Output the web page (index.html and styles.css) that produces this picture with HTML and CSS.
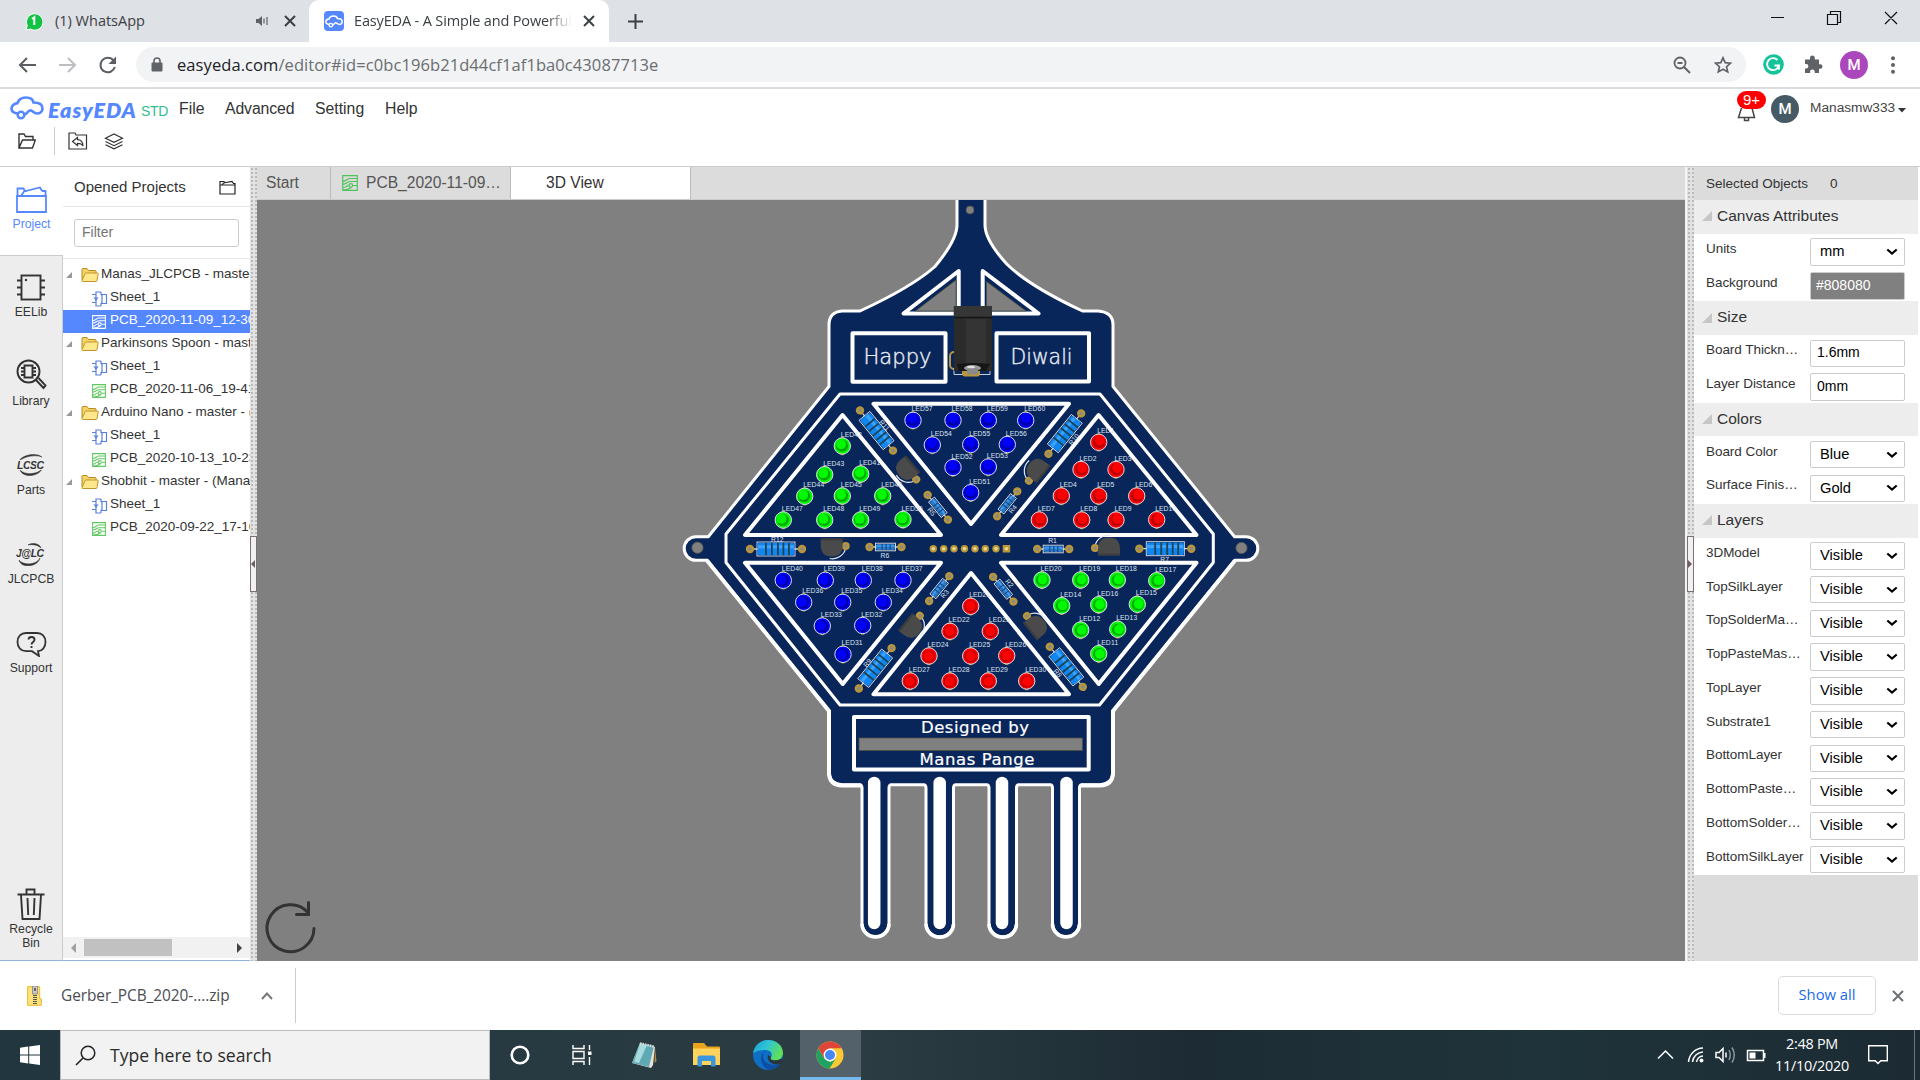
FILE: index.html
```html
<!DOCTYPE html>
<html lang="en">
<head>
<meta charset="utf-8">
<title>EasyEDA - A Simple and Powerful Electronic Circuit Design Tool</title>
<link rel="stylesheet" href="styles.css">
</head>
<body>
<svg class="defs" aria-hidden="true">
  <symbol id="i-folder" viewBox="0 0 18 16"><path d="M1 13V2.500Q1 1.500 2 1.500h4l1.500 2h6.500q1 0 1 1V6" fill="#f3d268" stroke="#b98a1d"/><path d="M1 13.500 4.200 6.500q.3-.5 1-.5H16.500q.9 0 .7.8L16 13.500q-.2 1-1 1H2q-1 0-1-1z" fill="#ffe88c" stroke="#c2942a"/></symbol>
  <symbol id="i-sheet" viewBox="0 0 16 16"><path d="M0 3.500h4M0 11.500h4M4 7V1h5M4 9v6h5" fill="none" stroke="currentColor" stroke-width="1.200"/><path d="M2.500 7l1.500 2 1.500-2zM9 4h1M9 12h1M10 3.500h4.500v9H10zM9 1v2.500h1M9 15v-2.500h1" fill="none" stroke="currentColor" stroke-width="1.200"/></symbol>
  <symbol id="i-pcb" viewBox="0 0 16 16"><path d="M.7.7h14.600v14.600H.7zM.7 6.500c4-.5 4-2.500 7-3h7.600M.7 9.500c4-.5 4.500-3 7.500-3h7M.7 13c3-.2 3.300-2.300 6-2.700M11 10.500h4M.7 15c4 .2 6-.5 9-2.700" fill="none" stroke="currentColor" stroke-width="1.200"/><circle cx="8.800" cy="10.500" r="1.800" fill="none" stroke="currentColor" stroke-width="1.200"/></symbol>
  <symbol id="i-tri" viewBox="0 0 10 10"><path d="M10 0v10H0z" fill="currentColor"/></symbol>
  <symbol id="i-chev" viewBox="0 0 12 8"><path d="M1.300 1.500 6 5.500l4.700-4" fill="none" stroke="#000" stroke-width="2.200"/></symbol>
  <symbol id="i-x" viewBox="0 0 12 12"><path d="M1 1l10 10M11 1L1 11" fill="none" stroke="currentColor" stroke-width="2"/></symbol>
  <symbol id="i-cloud" viewBox="0 0 34 24"><path d="M7.500 17.500C3.500 17 1.500 15 1.500 12.500S4 7.500 7.500 7.200C8.500 3.500 12 1.500 16 1.500c4 0 7 2 7.500 5 4.500 0 9 1.500 9 6 0 3.300-2.700 5-5.500 5-3.500 0-4.500-3.500-7-3-2.700.6-2.700 3.500-5.500 4" fill="none" stroke="currentColor" stroke-width="2.700" stroke-linecap="round"/><circle cx="11" cy="19" r="3.300" fill="none" stroke="currentColor" stroke-width="2.500"/></symbol>
</svg>

<div class="tabstrip">
  <div class="btab">
    <svg class="ic-wa" width="18" height="19" viewBox="0 0 18 19"><path d="M1 18l1.300-4.500A8.200 8.200 0 1 1 5.500 17z" fill="#11c244" stroke="#fff"/><path d="M7 7l2.300-1.800V13" fill="none" stroke="#fff" stroke-width="2"/></svg>
    <span class="btab-t t-wa">(1) WhatsApp</span>
    <svg class="ic-snd" width="13" height="12" viewBox="0 0 13 12"><path d="M0 4h2.500L6 1v10L2.500 8H0z" fill="#5f6368"/><path d="M8 3.500v5M11 2v8" stroke="#5f6368" stroke-width="1.200" fill="none"/></svg>
    <svg class="ic-x1" width="12" height="12"><use href="#i-x"/></svg>
  </div>
  <div class="btab active">
    <div class="favicon"><svg width="18" height="13"><use href="#i-cloud"/></svg></div>
    <span class="btab-t t-eda">EasyEDA - A Simple and Powerful</span>
    <svg class="ic-x2" width="12" height="12"><use href="#i-x"/></svg>
  </div>
  <svg class="ic-plus" width="15" height="15" viewBox="0 0 15 15"><path d="M7.500 0v15M0 7.500h15" stroke="#3c4043" stroke-width="2"/></svg>
  <svg class="winctl" width="130" height="16" viewBox="0 0 130 16"><path d="M0 6.500h13M56.500 3.500h10v10h-10zM59.500 3V.5h10v11H67M114 1l12 12M126 1l-12 12" fill="none" stroke="#111" stroke-width="1.200"/></svg>
</div>

<div class="toolbar">
  <svg width="102" height="20" viewBox="0 0 102 20"><g fill="none" stroke-width="2"><path d="M19 10H3M10 3l-7 7 7 7" stroke="#5a5d61"/><path d="M42 10h16M51 3l7 7-7 7" stroke="#bcbec1"/><path d="M96.500 5.500A7.300 7.300 0 1 0 97.800 12" stroke="#5a5d61"/></g><path d="M99 1.500V9h-7.500z" fill="#5a5d61"/></svg>
  <div class="omnibox">
    <svg width="12" height="15" viewBox="0 0 12 15"><path d="M3 6V4a3 3 0 0 1 6 0v2" fill="none" stroke="#5f6368" stroke-width="1.600"/><rect x=".5" y="5.500" width="11" height="9" rx="1" fill="#5f6368"/></svg>
    <span class="url"><b>easyeda.com</b>/editor#id=c0bc196b21d44cf1af1ba0c43087713e</span>
    <svg class="ic-zoom" width="18" height="18" viewBox="0 0 18 18"><circle cx="7" cy="7" r="5.500" fill="none" stroke="#5f6368" stroke-width="1.800"/><path d="M4.500 7h5M11 11l6 6" stroke="#5f6368" stroke-width="2"/></svg>
    <svg class="ic-star" width="18" height="18" viewBox="0 0 18 18"><path d="M9 1.800l2.200 4.900 5.300.5-4 3.500 1.200 5.200L9 13.200l-4.700 2.700 1.200-5.200-4-3.500 5.300-.5z" fill="none" stroke="#5f6368" stroke-width="1.700"/></svg>
  </div>
  <svg class="ic-gram" width="21" height="21" viewBox="0 0 21 21"><circle cx="10.500" cy="10.500" r="10.300" fill="#15c39a"/><path d="M14.500 6A6 6 0 1 0 16 11.500h-4.500M16 11.500v4" fill="none" stroke="#fff" stroke-width="1.900"/></svg>
  <svg class="ic-puz" width="19" height="19" viewBox="0 0 19 19"><path d="M1 4.500h5V3a2.400 2.400 0 0 1 4.800 0v1.500H15v4.700h1.200a2.300 2.300 0 0 1 0 4.600H15V18h-4.300v-1.200a2.300 2.300 0 0 0-4.600 0V18H1v-4.500h1.200a2.200 2.200 0 0 0 0-4.400H1z" fill="#5f6368"/></svg>
  <div class="avatar purple">M</div>
  <svg class="ic-dots" width="4" height="18" viewBox="0 0 4 18"><circle cx="2" cy="2.200" r="2"/><circle cx="2" cy="9" r="2"/><circle cx="2" cy="15.800" r="2"/></svg>
</div>

<header class="app">
  <div class="menu">
    <svg class="logo" width="34" height="26"><use href="#i-cloud"/></svg>
    <span class="brand">EasyEDA</span><span class="std">STD</span>
    <span class="m1">File</span><span class="m2">Advanced</span><span class="m3">Setting</span><span class="m4">Help</span>
    <div class="bell">
      <svg width="20" height="14" viewBox="0 0 20 14"><path d="M4.500 0 1.500 9.500h16L15 0M7.500 10v2.500h4V10" fill="none" stroke="#444" stroke-width="1.500"/></svg>
      <span class="badge">9+</span>
    </div>
    <div class="avatar slate">M</div>
    <span class="user">Manasmw333</span>
    <svg class="caret" width="8" height="5" viewBox="0 0 8 5"><path d="M0 0h8L4 4.500z" fill="#333"/></svg>
  </div>
  <div class="tools">
    <svg width="18" height="16" viewBox="0 0 18 16"><path d="M1 15V1h5l1.500 2.500H15V7M1 15h13.500l2.800-8H4.500z" fill="none" stroke="#333" stroke-width="1.400"/></svg>
    <i class="sep"></i>
    <svg width="20" height="18" viewBox="0 0 20 18"><path d="M1 17V1h6l1 2h10.500v14zM9.500 5.500 4.500 9.500l5 4v-2.200c3 0 4.500.7 5.500 2.700 0-4-2-6.300-5.500-6.300z" fill="none" stroke="#333" stroke-width="1.200"/></svg>
    <svg class="lay" width="20" height="17" viewBox="0 0 20 17"><path d="M10 1l8.500 4.200L10 9.400 1.500 5.200zM1.500 8.500 10 12.700l8.500-4.200M1.500 11.700 10 15.900l8.500-4.200" fill="none" stroke="#333" stroke-width="1.200"/></svg>
  </div>
</header>

<main class="work">
  <nav class="rail">
    <div class="rail-i on"><svg width="31" height="27" viewBox="0 0 31 27"><path d="M1 10h29v16H1zM1.500 10V2.500h6L9 5h2M5 10l3-4.500 16-4 2 3.500M26 5h3.500v5" fill="none" stroke="#5588ff" stroke-width="1.800"/></svg><span>Project</span></div>
    <div class="rail-i"><svg width="30" height="27" viewBox="0 0 30 27"><rect x="5.500" y="1.500" width="19" height="24" fill="none" stroke="#333" stroke-width="1.900"/><path d="M1 6.500h4M1 13.500h4M1 20.500h4M25 6.500h4M25 13.500h4M25 20.500h4" stroke="#333" stroke-width="1.900"/><circle cx="10" cy="6" r="1.200" fill="#333"/></svg><span>EELib</span></div>
    <div class="rail-i"><svg width="31" height="31" viewBox="0 0 31 31"><circle cx="12.500" cy="12.500" r="11" fill="none" stroke="#333" stroke-width="1.900"/><path d="M8.500 6.500h8v12h-8zM5 9h3.500M5 12.500h3.500M5 16h3.500M16.500 9H20M16.500 12.500H20M16.500 16H20M20 21l7.500 8 2-2.500-7-7.500" fill="none" stroke="#333" stroke-width="1.900"/></svg><span>Library</span></div>
    <div class="rail-i lc"><svg width="30" height="24" viewBox="0 0 30 24"><path d="M3 8C6 2 20-1 26 4 20 1.500 9 3 3 8zM4 17c4 5 17 5 22-1-4 8-19 9-22 1z" fill="#333" stroke="#333" stroke-width=".5"/><text x="1" y="15.500" textLength="27" class="lcsc">LCSC</text></svg><span>Parts</span></div>
    <div class="rail-i lc"><svg width="30" height="24" viewBox="0 0 30 24"><path d="M12 3c5-3 12-1 13 3-3-3-8-4-13-3zM3 18c3 5 17 6 21-2-2 9-19 11-21 2z" fill="#333" stroke="#333" stroke-width=".5"/><text x="0" y="14.500" textLength="28" class="lcsc">J@LC</text></svg><span>JLCPCB</span></div>
    <div class="rail-i"><svg width="31" height="25" viewBox="0 0 31 25"><path d="M10 1h11c5 0 8.500 3.500 8.500 9S26 19 22 19.200l1 4.800-7-4.800h-6c-5 0-8.500-3.700-8.500-9.200S5 1 10 1z" fill="none" stroke="#333" stroke-width="1.800"/><path d="M12.500 7.500c.3-3.500 6-3.300 6 .2 0 2.300-3 2.200-3 4.800M15.500 14v2" fill="none" stroke="#333" stroke-width="1.900"/></svg><span>Support</span></div>
    <div class="rail-i bin"><svg width="28" height="32" viewBox="0 0 28 32"><path d="M.5 6.500h27M9.500 6V1.500h8V6M4 7l1.500 24h17L24 7M10.500 10l.7 17M17.500 10l-.7 17" fill="none" stroke="#333" stroke-width="1.900"/></svg><span>Recycle<br>Bin</span></div>
  </nav>

  <aside class="projects">
    <div class="p-head"><span>Opened Projects</span><svg width="17" height="15" viewBox="0 0 17 15"><path d="M1 5h15v9H1zM1 5V1.500h4L6 3M3 5l1.500-2L13 1.500l1.500 2H16V5" fill="none" stroke="#222" stroke-width="1.200"/></svg></div>
    <div class="p-filter"><div class="filter">Filter</div></div>
    <div class="tree">
      <div class="row"><svg class="tw" width="6" height="6"><use href="#i-tri"/></svg><svg width="18" height="16"><use href="#i-folder"/></svg><span>Manas_JLCPCB - master</span></div>
      <div class="row leaf"><svg width="16" height="16"><use href="#i-sheet"/></svg><span>Sheet_1</span></div>
      <div class="row leaf sel"><svg class="pcb" width="14" height="14"><use href="#i-pcb"/></svg><span>PCB_2020-11-09_12-30</span></div>
      <div class="row"><svg class="tw" width="6" height="6"><use href="#i-tri"/></svg><svg width="18" height="16"><use href="#i-folder"/></svg><span>Parkinsons Spoon - mast</span></div>
      <div class="row leaf"><svg width="16" height="16"><use href="#i-sheet"/></svg><span>Sheet_1</span></div>
      <div class="row leaf"><svg class="pcb" width="14" height="14"><use href="#i-pcb"/></svg><span>PCB_2020-11-06_19-41</span></div>
      <div class="row"><svg class="tw" width="6" height="6"><use href="#i-tri"/></svg><svg width="18" height="16"><use href="#i-folder"/></svg><span>Arduino Nano - master - (</span></div>
      <div class="row leaf"><svg width="16" height="16"><use href="#i-sheet"/></svg><span>Sheet_1</span></div>
      <div class="row leaf"><svg class="pcb" width="14" height="14"><use href="#i-pcb"/></svg><span>PCB_2020-10-13_10-23</span></div>
      <div class="row"><svg class="tw" width="6" height="6"><use href="#i-tri"/></svg><svg width="18" height="16"><use href="#i-folder"/></svg><span>Shobhit - master - (Mana</span></div>
      <div class="row leaf"><svg width="16" height="16"><use href="#i-sheet"/></svg><span>Sheet_1</span></div>
      <div class="row leaf"><svg class="pcb" width="14" height="14"><use href="#i-pcb"/></svg><span>PCB_2020-09-22_17-16</span></div>
    </div>
    <div class="hscroll"><svg width="5" height="10" viewBox="0 0 5 10"><path d="M5 0v10L0 5z" fill="#a0a0a0"/></svg><i></i><svg class="r" width="5" height="10" viewBox="0 0 5 10"><path d="M0 0v10l5-5z" fill="#404040"/></svg></div>
  </aside>

  <div class="split"><div class="grip"><svg width="4" height="8" viewBox="0 0 4 8"><path d="M4 0v8L0 4z" fill="#6b5f63"/></svg></div></div>

  <section class="center">
    <div class="tabs">
      <div class="tab start">Start</div>
      <div class="tab pcbtab"><svg width="16" height="16"><use href="#i-pcb"/></svg><span>PCB_2020-11-09…</span></div>
      <div class="tab view on">3D View</div>
    </div>
    <svg class="board" id="board" viewBox="257 200 1428 761" width="1428" height="761"></svg>
  </section>

  <div class="split right"><div class="grip"><svg width="4" height="8" viewBox="0 0 4 8"><path d="M0 0v8l4-4z" fill="#6b5f63"/></svg></div></div>

  <aside class="props">
    <div class="sel-obj"><span>Selected Objects</span><span>0</span></div>
    <div class="ph"><svg width="10" height="10"><use href="#i-tri"/></svg>Canvas Attributes</div>
    <div class="pr"><label>Units</label><div class="in dd">mm<svg width="12" height="8"><use href="#i-chev"/></svg></div></div>
    <div class="pr"><label>Background</label><div class="in bg">#808080</div></div>
    <div class="ph"><svg width="10" height="10"><use href="#i-tri"/></svg>Size</div>
    <div class="pr"><label>Board Thickn…</label><div class="in">1.6mm</div></div>
    <div class="pr"><label>Layer Distance</label><div class="in">0mm</div></div>
    <div class="ph"><svg width="10" height="10"><use href="#i-tri"/></svg>Colors</div>
    <div class="pr"><label>Board Color</label><div class="in dd">Blue<svg width="12" height="8"><use href="#i-chev"/></svg></div></div>
    <div class="pr"><label>Surface Finis…</label><div class="in dd">Gold<svg width="12" height="8"><use href="#i-chev"/></svg></div></div>
    <div class="ph"><svg width="10" height="10"><use href="#i-tri"/></svg>Layers</div>
    <div class="pr"><label>3DModel</label><div class="in dd">Visible<svg width="12" height="8"><use href="#i-chev"/></svg></div></div>
    <div class="pr"><label>TopSilkLayer</label><div class="in dd">Visible<svg width="12" height="8"><use href="#i-chev"/></svg></div></div>
    <div class="pr"><label>TopSolderMa…</label><div class="in dd">Visible<svg width="12" height="8"><use href="#i-chev"/></svg></div></div>
    <div class="pr"><label>TopPasteMas…</label><div class="in dd">Visible<svg width="12" height="8"><use href="#i-chev"/></svg></div></div>
    <div class="pr"><label>TopLayer</label><div class="in dd">Visible<svg width="12" height="8"><use href="#i-chev"/></svg></div></div>
    <div class="pr"><label>Substrate1</label><div class="in dd">Visible<svg width="12" height="8"><use href="#i-chev"/></svg></div></div>
    <div class="pr"><label>BottomLayer</label><div class="in dd">Visible<svg width="12" height="8"><use href="#i-chev"/></svg></div></div>
    <div class="pr"><label>BottomPaste…</label><div class="in dd">Visible<svg width="12" height="8"><use href="#i-chev"/></svg></div></div>
    <div class="pr"><label>BottomSolder…</label><div class="in dd">Visible<svg width="12" height="8"><use href="#i-chev"/></svg></div></div>
    <div class="pr"><label>BottomSilkLayer</label><div class="in dd">Visible<svg width="12" height="8"><use href="#i-chev"/></svg></div></div>
  </aside>
</main>

<div class="downloads">
  <div class="dl">
    <svg width="15" height="20" viewBox="0 0 15 20"><path d="M.7.7h12v12h1.600v6.600H.7z" fill="#ffe27a" stroke="#e8b92e"/><path d="M5.500 0h5v8h-5z" fill="#c9c9c9" stroke="#777" stroke-width=".7"/><path d="M8 2v3" stroke="#444" stroke-width="1.500"/><path d="M8 9v10" stroke="#555" stroke-width="4" stroke-dasharray="1 1"/></svg>
    <span>Gerber_PCB_2020-....zip</span>
    <svg class="up" width="12" height="8" viewBox="0 0 12 8"><path d="M1 7l5-5.500L11 7" fill="none" stroke="#777" stroke-width="2"/></svg>
  </div>
  <div class="showall">Show all</div>
  <svg class="dlx" width="12" height="12"><use href="#i-x"/></svg>
</div>

<footer class="taskbar">
  <div class="start-btn"><svg width="20" height="20" viewBox="0 0 20 20"><path d="M0 2.800 8.200 1.600v7.900H0zM9.200 1.500 20 0v9.500H9.200zM0 10.500h8.200v7.900L0 17.200zM9.200 10.500H20V20L9.200 18.500z" fill="#fff"/></svg></div>
  <div class="search"><svg width="21" height="21" viewBox="0 0 21 21"><circle cx="13" cy="8" r="6.800" fill="none" stroke="#222" stroke-width="1.500"/><path d="M8 13 1 20" stroke="#222" stroke-width="1.600"/></svg><span>Type here to search</span></div>
  <div class="tb-i"><svg width="20" height="20" viewBox="0 0 20 20"><circle cx="10" cy="10" r="8.300" fill="none" stroke="#fff" stroke-width="2.600"/></svg></div>
  <div class="tb-i"><svg width="22" height="20" viewBox="0 0 22 20"><path d="M2 0v3.500h11V0M2 20v-3.500h11V20M2 6.500h11v7H2zM18.500 0v5M18.500 12v8" fill="none" stroke="#fff" stroke-width="1.400"/><path d="M17 6.500h3.500V10H17z" fill="#fff"/></svg></div>
  <div class="tb-i"><svg width="27" height="27" viewBox="0 0 27 27"><path d="M9 1 24 5 22 23 20 26 1 21z" fill="#e7e3da"/><path d="M9 1 23 4 18 25 1 21z" fill="#5fa9b5"/><path d="M9 2 16 3 8 21 3 20z" fill="#a8dbe0"/><path d="M9 1.500 23 4.500" stroke="#ddd" stroke-width="2.500" stroke-dasharray="1.500 1"/><path d="M24 6l1.500 13-2 2z" fill="#b98b3f"/></svg></div>
  <div class="tb-i"><svg width="27" height="24" viewBox="0 0 27 24"><path d="M0 1q0-1 1-1h10l3 3.500h12q1 0 1 1V22H0z" fill="#e9a31d"/><path d="M0 5.500h27V22H0z" fill="#ffd25c"/><path d="M4.500 23.500V15q0-2.500 2.500-2.500h13q2.500 0 2.500 2.500v8.500H18V18H9v5.500z" fill="#3a96dd"/></svg></div>
  <div class="tb-i"><svg width="30" height="30" viewBox="0 0 30 30"><defs><linearGradient id="eg" x1="0" y1="0" x2="1" y2=".4"><stop offset="0" stop-color="#1a9ad6"/><stop offset=".5" stop-color="#2fc4d6"/><stop offset="1" stop-color="#5ee05a"/></linearGradient></defs><circle cx="15" cy="15" r="15" fill="#0f6fc6"/><path d="M0 14C1 5 8 0 15 0c9 0 15 6 15 13 0 5-4 7.500-8 7.500-3.500 0-5.500-1.200-4-3.200 1.500-2 1.500-7.300-6-7.300C6 10 1 12 0 14z" fill="url(#eg)"/><path d="M12 11c-3 3-3 9 2 12 4 2.500 9 2.300 14 0-3 4-7 6.500-11 7C8 28 5 16 12 11z" fill="#0c4fa3"/><path d="M18 17c-2 3 4 5 11 1.500l1 2q-1 2-3 3.500C20 26 13 21 15 15z" fill="#29373d"/></svg></div>
  <div class="tb-i act"><svg width="28" height="28" viewBox="0 0 28 28"><circle cx="14" cy="14" r="13.500" fill="#fbc934"/><path d="M2.300 7.200A13.500 13.500 0 0 1 25.700 7.200H14L8.100 17.400z" fill="#e04638"/><path d="M2.300 7.200A13.500 13.500 0 0 0 13.500 27.500L19.800 17.500 14 20.800 8.100 17.400z" fill="#1da362"/><circle cx="14" cy="14" r="6.400" fill="#fff"/><circle cx="14" cy="14" r="5" fill="#4587f4"/></svg></div>
  <svg class="tray" width="110" height="20" viewBox="0 0 110 20"><g fill="none" stroke="#fff" stroke-width="1.500"><path d="M1 13.500 8.500 6l7.500 7.500"/><path d="M31.500 17A15 15 0 0 1 46 3M35.500 17A11 11 0 0 1 46 7M39.500 17A7 7 0 0 1 46 11"/><path d="M59 7.500h3l4-4v13l-4-4h-3z"/><path d="M69 7.500v5"/><path d="M72 5q2.500 5 0 10M75 2.500q4.500 7.500 0 15" stroke="#8d979b"/><path d="M90.500 5.500h16v10h-16z"/></g><circle cx="44.500" cy="15.500" r="2" fill="#fff"/><path d="M92.500 7.500h6v6h-6zM107 8h1.500v5H107z" fill="#fff"/></svg>
  <div class="clock"><span>2:48 PM</span><span>11/10/2020</span></div>
  <svg class="note" width="20" height="20" viewBox="0 0 20 20"><path d="M.7.7h18.600v15h-6.500L10 18.500 7.200 15.700H.7z" fill="none" stroke="#fff" stroke-width="1.400"/></svg>
  <i class="peek"></i>
</footer>
<script src="board.js"></script>
</body>
</html>
```
FILE: board.js
```js
// Draws the lantern PCB: outline, silkscreen, LEDs, resistors and transistors.
(function () {
  var out = [];
  var FACE = '#09265b';

  function poly(pts, cls) {
    out.push('<polygon class="' + cls + '" points="' + pts + '"/>');
  }
  function pad(x, y, r) {
    out.push('<circle cx="' + x + '" cy="' + y + '" r="' + r + '" fill="#b8963a"/><circle cx="' + x + '" cy="' + y + '" r="' + (r * 0.42) + '" fill="#8c8a80"/>');
  }

  // board outline with the four tassel fingers
  var fingers = [[862, 889], [926, 953.5], [989, 1016.5], [1052.500, 1079.500]];
  var d = 'M957 196V225Q957 240 935 266.500Q912 287 860 311H842Q829 312 829 325V386.500L708.300 536.700H696A11.700 11.700 0 0 0 696 560.300H707L829 711V774Q830 784 842 784.700';
  fingers.forEach(function (f) {
    var r = (f[1] - f[0]) / 2;
    d += 'H' + (f[0] - 2) + 'Q' + f[0] + ' 785 ' + f[0] + ' 788V923A' + r + ' ' + r + ' 0 0 0 ' + f[1] + ' 923V788Q' + f[1] + ' 785 ' + (f[1] + 2) + ' 784.700';
  });
  d += 'H1100Q1112 784 1113 774V711L1235 560.300H1246A11.700 11.700 0 0 0 1246 536.700H1234.500L1113 386.500V325Q1113 312 1098 311H1082.500Q1029 286 1006.700 264Q985 240 985 225V196Z';
  out.push('<path d="' + d + '" fill="' + FACE + '" stroke="#fff" stroke-width="3"/>');
  out.push('<path d="M707 560.500 829 711V774Q830 785 842 785.500H861M1235 560.500 1113 711V774Q1112 785 1100 785.500H1081" fill="none" stroke="#fff" stroke-width="4"/>');
  [874.2, 939.7, 1002, 1066.5].forEach(function (x, i) {
    out.push('<path d="M' + x + ' 783V923" stroke="#fff" stroke-width="12.500" stroke-linecap="round"/>');
    out.push('<path d="M' + fingers[i][0] + ' 924A13.500 13 0 0 0 ' + fingers[i][1] + ' 924" fill="none" stroke="#fff" stroke-width="3.600"/>');
  });
  [[970, 210, 4], [697.5, 547.7, 5.7], [1241.5, 548, 5.7]].forEach(function (h) {
    out.push('<circle cx="' + h[0] + '" cy="' + h[1] + '" r="' + h[2] + '" fill="#808080" stroke="#4f4d42" stroke-width=".7"/>');
  });

  // silkscreen frames
  poly('840,394 1100,394 1213.300,534 1213.300,562.500 1099.500,705 840,705 726,562.500 726,534', 'silk thin');
  poly('873.500,403.700 1069,403.700 971,524', 'silk');
  poly('842.500,415 745,535 941,535', 'silk');
  poly('1098.600,415 1001,535 1196.500,535', 'silk');
  poly('745,562.700 941,562.700 842.700,684', 'silk');
  poly('1001,562.700 1196.500,562.700 1098.700,684', 'silk');
  poly('971,573 873.500,694.300 1069,694.300', 'silk');
  poly('958.700,271 903.500,313.500 958.700,313.500', 'silk');
  poly('982.700,271 1038.500,313.500 982.700,313.500', 'silk');
  poly('956,280 915.500,311 956,311', 'slot');
  poly('986.500,281.500 1026,311 986.500,311', 'slot');
  out.push('<rect class="silk" x="852.500" y="333.300" width="93" height="48.500"/><rect class="silk" x="996.500" y="333.300" width="92.500" height="48.300"/>');
  out.push('<rect class="silk" x="854" y="717" width="234.700" height="52.500"/><rect class="slot" x="859" y="738" width="223.500" height="12.600"/>');
  out.push('<text class="word" x="863.500" y="364" textLength="68" lengthAdjust="spacingAndGlyphs">Happy</text><text class="word" x="1010.500" y="364" textLength="62" lengthAdjust="spacingAndGlyphs">Diwali</text>');
  out.push('<text class="by" x="921" y="733.300" textLength="108">Designed by</text><text class="by" x="919.500" y="764.800" textLength="115">Manas Pange</text>');

  // resistors: [cx, cy, angle, label, label dx, label dy]
  function resistor(cx, cy, a, big, name, ly) {
    var h = big ? 26 : 16, bl = big ? 19 : 10, bh = big ? 6.2 : 3;
    out.push('<g transform="translate(' + cx + ' ' + cy + ') rotate(' + a + ')">');
    out.push('<path d="M' + -h + ' 0H' + h + '" stroke="#d8d2c4" stroke-width="1.300"/>');
    pad(-h, 0, 4.2); pad(h, 0, 4.2);
    out.push('<rect x="' + -bl + '" y="' + (-bh - 0.8) + '" width="' + bl * 2 + '" height="' + (bh * 2 + 1.6) + '" fill="none" stroke="#dfe4ee" stroke-width=".9"/>');
    out.push('<rect x="' + (-bl + 0.5) + '" y="' + -bh + '" width="' + (bl * 2 - 1) + '" height="' + bh * 2 + '" rx="2" fill="' + (big ? '#0f86f2' : '#2c78c4') + '"/>');
    out.push('<rect x="' + (-bl + 1) + '" y="' + -bh * 0.6 + '" width="' + (bl * 2 - 2) + '" height="' + bh * 0.5 + '" fill="#3da3ff"/>');
    (big ? [-11, -5, 1, 6.5, 12] : [-4, 0, 4]).forEach(function (x) {
      out.push('<rect x="' + x + '" y="' + -bh + '" width="' + (big ? 1.8 : 1.2) + '" height="' + bh * 2 + '" fill="' + (big ? '#1d4350' : '#154a86') + '"/>');
    });
    out.push('<text class="ref" x="-5" y="' + ly + '">' + name + '</text></g>');
  }
  resistor(876.5, 430.5, 50.6, true, 'R11', -7);
  resistor(1064.8, 433.6, -51, true, 'R10', 13);
  resistor(776, 549, 0, true, 'R12', -7);
  resistor(1165.3, 548.7, 0, true, 'R7', 13);
  resistor(875.2, 668.3, -51, true, 'R9', -7);
  resistor(1066.3, 666.8, 50.6, true, 'R8', 13);
  resistor(937.8, 507.3, 50.6, false, 'R5', 10);
  resistor(1007.2, 503.8, -51, false, 'R4', 10);
  resistor(885.5, 547, 0, false, 'R6', 11);
  resistor(1053.2, 549, 0, false, 'R1', -6);
  resistor(939.2, 588.6, -51, false, 'R3', 10);
  resistor(1003.3, 589.2, 50.6, false, 'R2', -6);

  // transistors
  [[908, 468, 50], [1038.5, 470.5, 129], [831.7, 545, 0], [1109, 549, 180], [910.2, 626, -51], [1035, 627.5, 231]].forEach(function (t) {
    out.push('<g transform="translate(' + t[0] + ' ' + t[1] + ') rotate(' + t[2] + ')">');
    out.push('<path d="M-2 13.500A13.500 13.500 0 0 0 14 3" fill="none" stroke="#e5e8ef" stroke-width="1.200"/>');
    pad(14, 1, 4);
    out.push('<path d="M-11-6.500H11V0Q11 11.500 0 11.500T-11 0Z" fill="#4a4a4a"/><path d="M-11-6.500H11V-4.500H-11Z" fill="#3c3c3c"/></g>');
  });

  // header pins
  [933.3, 943.7, 954, 964.5, 975, 985.3, 996].forEach(function (x) {
    out.push('<circle cx="' + x + '" cy="548.700" r="3.700" fill="#b8963a"/><circle cx="' + x + '" cy="548.700" r="1.800" fill="#ead98a"/>');
  });
  out.push('<rect x="1002.700" y="545" width="7.500" height="7.500" fill="#b8963a"/><circle cx="1006.400" cy="548.700" r="1.800" fill="#ead98a"/>');

  // power jack
  out.push('<rect x="950" y="352" width="10" height="17" rx="4" fill="none" stroke="#b8963a" stroke-width="2"/><path d="M954 368V374.500H990V368" fill="none" stroke="#c9cedb"/>');
  out.push('<rect x="962" y="368" width="18" height="8.500" rx="3" fill="#b8963a"/>');
  out.push('<path d="M954 317H992V371Q985 372 981 366H964Q960 372 954 371Z" fill="#2b2b2b"/><rect x="953.700" y="306" width="38.300" height="11.500" fill="#363636"/><path d="M954 317.500H992" stroke="#151515" stroke-width="1.500"/>');
  out.push('<rect x="966" y="319" width="20" height="46" fill="#343434"/><path d="M957 364Q973 362 990 364L986 371H959Z" fill="#161616"/><ellipse cx="972.500" cy="368" rx="8.500" ry="3" fill="#9a9a9a"/><rect x="967" y="368" width="11" height="6.500" rx="2" fill="#8a8a8a"/><ellipse cx="971" cy="367" rx="4" ry="1.300" fill="#e0e0e0"/>');

  // LEDs: [x, y, number]
  var groups = [
    ['#00fa00', '#00a800', [[842.3, 446, 42], [824.7, 474.7, 43], [860.7, 474, 41], [804.7, 496.3, 44], [842.3, 496, 45], [882.7, 496, 46], [783.3, 520, 47], [824.7, 520, 48], [860.7, 520, 49], [903, 519.5, 50]]],
    ['#0000fa', '#0000a0', [[913, 420.3, 57], [953, 420.3, 58], [988.3, 420.3, 59], [1025.7, 420.3, 60], [932.3, 445, 54], [970.7, 444.5, 55], [1007.3, 444.5, 56], [953, 467.5, 52], [988.3, 467, 53], [970.7, 492.7, 51]]],
    ['#ff0000', '#b80000', [[1098.7, 442.3, 1], [1081, 469.5, 2], [1116, 469.5, 3], [1061.3, 496, 4], [1098.7, 496, 5], [1136.7, 496, 6], [1039.3, 520, 7], [1081.7, 520, 8], [1116, 520, 9], [1156.7, 519.7, 10]]],
    ['#0000fa', '#0000a0', [[783.3, 580.3, 40], [825.3, 580.3, 39], [863.3, 580.3, 38], [903, 580.3, 37], [803.7, 602.3, 36], [842.7, 602.3, 35], [883.3, 602.3, 34], [822.3, 626, 33], [862.7, 625.5, 32], [843, 654.3, 31]]],
    ['#ff0000', '#b80000', [[970.7, 606.3, 21], [950, 631.3, 22], [990.3, 631.3, 23], [929, 656, 24], [970.7, 656, 25], [1006.7, 655.7, 26], [910.3, 681, 27], [950, 681, 28], [988.3, 681, 29], [1026.7, 681, 30]]],
    ['#00fa00', '#00a800', [[1042, 580, 20], [1080.7, 580, 19], [1117.3, 580, 18], [1156.7, 580.7, 17], [1061.7, 605.7, 14], [1098.7, 604.7, 16], [1137.3, 604.3, 15], [1080.7, 630, 12], [1117.7, 629.3, 13], [1098.7, 653.7, 11]]]
  ];
  groups.forEach(function (g) {
    g[2].forEach(function (p) {
      var x = p[0], y = p[1];
      // each dome leans away from the middle of the board
      var dx = (x - 971) * 0.009, dy = (y - 548) * 0.009;
      out.push('<rect x="' + (x - 2) + '" y="' + (y - 9.2) + '" width="4" height="18.400" rx="1.500" fill="#a98d45"/>');
      out.push('<circle cx="' + x + '" cy="' + y + '" r="8.200" fill="' + g[0] + '" stroke="#d9dce8" stroke-width="1"/>');
      out.push('<circle cx="' + (x + dx * 0.4) + '" cy="' + (y + dy * 0.4) + '" r="6.200" fill="' + g[1] + '"/>');
      out.push('<circle cx="' + (x + dx) + '" cy="' + (y - 0.8 + dy) + '" r="4.900" fill="' + g[0] + '"/>');
      out.push('<text class="ref" x="' + (x - 1.5) + '" y="' + (y - 9) + '" textLength="' + (p[2] < 10 ? 17 : 21) + '">LED' + p[2] + '</text>');
    });
  });

  // reset-view arrow in the corner of the viewport
  out.push('<path d="M314 928.500A23.500 23.500 0 1 1 308 912.500M308.500 902.500V914.500H296.500" fill="none" stroke="#333" stroke-width="3" stroke-linecap="round"/>');

  document.getElementById('board').innerHTML = out.join('');
})();
```
FILE: styles.css
```css
* { box-sizing: border-box; }
body { margin: 0; width: 1920px; height: 1080px; overflow: hidden; background: #fff; color: #333; font: 13.5px/1.2 "Liberation Sans", Arial, sans-serif; display: flex; flex-direction: column; }
svg { display: block; flex: none; }
.defs { position: absolute; width: 0; height: 0; }

/* browser chrome */
.tabstrip { height: 42px; flex: none; background: #dee1e6; display: flex; align-items: center; font-family: "Open Sans", sans-serif; }
.btab { height: 42px; width: 309px; display: flex; align-items: center; padding-left: 25px; color: #3c4043; font-size: 14.5px; }
.btab.active { width: 300px; background: #fff; border-radius: 10px 10px 0 0; padding-left: 15px; }
.btab-t { white-space: nowrap; overflow: hidden; }
.t-wa { margin-left: 12px; width: 201px; }
.t-eda { margin-left: 10px; width: 218px; letter-spacing: -.15px; -webkit-mask-image: linear-gradient(90deg, #000 88%, transparent 100%); mask-image: linear-gradient(90deg, #000 88%, transparent 100%); }
.ic-x1 { margin-left: 15px; color: #3c4043; }
.ic-x2 { margin-left: 11px; color: #3c4043; }
.favicon { width: 20px; height: 20px; border-radius: 4px; background: #5588ff; color: #fff; display: flex; align-items: center; justify-content: center; }
.ic-plus { margin-left: 19px; }
.winctl { margin-left: auto; margin-right: 19px; margin-bottom: 4px; }
.toolbar { height: 47px; flex: none; display: flex; align-items: center; padding: 0 25px 0 17px; border-bottom: 2px solid #dadce0; }
.omnibox { margin-left: 17px; width: 1610px; height: 35px; border-radius: 18px; background: #f1f3f4; display: flex; align-items: center; padding-left: 15px; }
.url { margin-left: 14px; width: 1484px; font: 16.5px "Open Sans", sans-serif; color: #6a6d71; letter-spacing: .08px; }
.url b { font-weight: 400; color: #202124; }
.ic-zoom { margin-left: 12px; }
.ic-star { margin-left: 23px; }
.ic-gram { margin-left: 17px; }
.ic-puz { margin-left: 20px; }
.avatar { width: 28px; height: 28px; border-radius: 50%; color: #fff; display: flex; align-items: center; justify-content: center; font: 500 15px Roboto, sans-serif; flex: none; }
.purple { background: #ab47bc; margin-left: 17px; }
.slate { background: #455a64; margin-left: 4px; margin-top: -2px; }
.ic-dots { margin-left: 23px; fill: #5f6368; }

/* application header */
.app { height: 78px; flex: none; border-bottom: 1px solid #ccc; }
.menu { height: 40px; display: flex; align-items: center; padding: 1px 0 0 10px; font-size: 15.8px; }
.logo { color: #5588ff; margin-top: -3px; }
.brand { margin-left: 4px; width: 91px; font: italic 800 21.5px "Lato", sans-serif; letter-spacing: .9px; color: #5588ff; }
.std { width: 27px; margin-left: 2px; font-size: 14px; color: #33bd91; padding-top: 3px; letter-spacing: -.3px; }
.m1 { margin-left: 11px; width: 46px; }
.m2 { width: 90px; letter-spacing: -.1px; }
.m3 { width: 70px; }
.m4 { width: 33px; }
.bell { position: relative; margin-left: 1319px; width: 30px; height: 40px; padding-top: 18px; }
.badge { position: absolute; left: 0; top: 1px; width: 29px; height: 18px; border-radius: 9px; background: #f00; color: #fff; font-size: 15px; line-height: 18px; text-align: center; }
.user { margin-left: 11px; font-size: 13.7px; color: #444; padding-bottom: 2px; }
.caret { margin-left: 3px; margin-top: 1px; }
.tools { display: flex; align-items: center; height: 28px; margin-top: -2px; padding-left: 18px; }
.sep { width: 1px; height: 28px; background: #ccc; margin-left: 18px; margin-right: 13px; }
.lay { margin-left: 16px; }

/* workspace */
.work { height: 794px; flex: none; display: flex; }
.rail { width: 63px; background: #ededed; border-right: 1px solid #ccc; border-bottom: 1px solid #8fb4de; display: flex; flex-direction: column; font-size: 12.2px; }
.rail-i { height: 89px; display: flex; flex-direction: column; align-items: center; justify-content: flex-end; padding-bottom: 26px; text-align: center; line-height: 14px; }
.rail-i svg { margin-bottom: 4px; }
.rail-i.lc svg { margin-bottom: 6px; }
.rail-i.on { background: #fff; color: #5588ff; width: 63px; border-bottom: 1px solid #ccc; padding-bottom: 24px; }
.rail-i.bin { margin-top: auto; padding-bottom: 10px; }
.rail-i.bin svg { margin-bottom: 2px; }
.lcsc { font: italic 700 10.5px "Liberation Sans", sans-serif; fill: #333; stroke: #ededed; stroke-width: 2px; paint-order: stroke; }
.projects { width: 187px; display: flex; flex-direction: column; overflow: hidden; border-bottom: 1px solid #8fb4de; }
.p-head { height: 40px; flex: none; border-bottom: 1px solid #e6e6e6; display: flex; align-items: center; justify-content: space-between; padding: 1px 14px 0 11px; font-size: 15px; }
.p-filter { height: 52px; flex: none; padding: 12px 11px; border-bottom: 1px solid #e6e6e6; }
.filter { height: 28px; border: 1px solid #ccc; border-radius: 3px; color: #757575; font-size: 14px; line-height: 25px; padding-left: 7px; }
.tree { flex: 1; padding-top: 5px; }
.row { height: 23px; display: flex; align-items: center; padding-left: 3px; white-space: nowrap; }
.row span { margin-left: 2px; padding-bottom: 3px; }
.row svg { margin-bottom: 2px; }
.row .tw { margin: 0 9px 2px 0; color: #999; }
.leaf { padding-left: 29px; }
.leaf svg { color: #5a7fe0; margin-bottom: 0; }
.leaf span { padding-bottom: 2px; }
.leaf svg.pcb { color: #5fc75f; }
.leaf .pcb + span { margin-left: 4px; }
.leaf.sel { background: #5588ff; color: #fff; }
.leaf.sel svg.pcb { color: #fff; }
.hscroll { height: 21px; margin-bottom: 2px; background: #f1f1f1; display: flex; align-items: center; padding: 0 8px; }
.hscroll i { width: 88px; height: 17px; background: #c1c1c1; margin-left: 8px; }
.hscroll .r { margin-left: auto; }
.split { width: 7px; background-color: #e2e2e2; background-image: radial-gradient(circle, #bbb 0.8px, transparent 1px); background-size: 4px 4px; display: flex; flex-direction: column; justify-content: center; }
.split .grip { width: 7px; height: 56px; border: 1px solid #7d7074; background: #f1f1f1; display: flex; align-items: center; }
.split.right { width: 9px; border-left: 2px solid #f4f4f4; }
.center { width: 1428px; display: flex; flex-direction: column; }
.tabs { height: 33px; background: #dcdcdc; border-bottom: 1px solid #ccc; display: flex; font-size: 15.6px; color: #555; }
.tab { border-right: 1px solid #bbb; display: flex; align-items: center; padding-top: 1px; }
.start { width: 74px; padding-left: 9px; }
.pcbtab { width: 180px; padding-left: 11px; gap: 8px; }
.pcbtab svg { color: #4fc35a; margin-bottom: 1px; }
.view { width: 180px; padding-left: 35px; background: #fff; color: #333; }
.board { background: #808080; }
.silk { fill: none; stroke: #fff; stroke-width: 4; stroke-linejoin: round; }
.silk.thin { stroke-width: 3; }
.slot { fill: #808080; stroke: #4d5040; stroke-width: .8; }
.word { font: 200 21.5px "DejaVu Sans", "DejaVu Sans Light", sans-serif; fill: #e9edf5; stroke: #e9edf5; stroke-width: .4px; }
.by { font: 400 16.5px "DejaVu Sans", sans-serif; fill: #fff; stroke: #fff; stroke-width: .2px; }
.ref { font: 6.8px "Liberation Sans", sans-serif; fill: #dde3ef; }

/* properties */
.props { width: 224px; background: #dcdcdc; }
.sel-obj { height: 33px; display: flex; align-items: center; gap: 22px; padding: 1px 0 0 12px; }
.ph { height: 33.75px; background: #ededed; display: flex; align-items: center; gap: 5px; padding: 0 0 1px 8px; font-size: 15.5px; }
.ph svg { color: #c6c6c6; }
.pr { height: 33.75px; background: #fff; display: flex; align-items: center; padding-left: 12px; padding-top: 3px; }
.pr label { width: 104px; padding-bottom: 6px; white-space: nowrap; letter-spacing: -.05px; }
.in { width: 95px; height: 27.5px; border: 1px solid #ccc; border-radius: 2px; background: #fff; color: #000; font-size: 14px; display: flex; align-items: center; padding: 0 0 1px 6px; }
.in.dd { font-size: 14.7px; justify-content: space-between; padding: 0 6px 0 9px; }
.in.bg { background: #808080; color: #fff; padding-left: 5px; }

/* downloads shelf */
.downloads { height: 69px; flex: none; background: #fff; display: flex; align-items: center; font-family: "Open Sans", sans-serif; }
.dl { width: 296px; height: 55px; border-right: 1px solid #ccc; display: flex; align-items: center; padding-left: 27px; color: #4a4d51; font-size: 15.4px; }
.dl span { margin-left: 19px; width: 171px; white-space: nowrap; letter-spacing: -.05px; padding-top: 2px; }
.dl .up { margin-left: 29px; }
.showall { margin-left: auto; width: 98px; height: 39px; border: 1px solid #dadce0; border-radius: 5px; color: #1a6be8; font-size: 14.8px; display: flex; align-items: center; justify-content: center; margin-bottom: 1px; }
.dlx { margin: 0 16px 0 16px; color: #6d7074; }

/* taskbar */
.taskbar { height: 50px; flex: none; display: flex; align-items: center; background: linear-gradient(90deg, #22363f 0, #2b3c42 45%, #1d2c34 62%, #1f333b 80%, #1c2b33 100%); color: #fff; font-family: "Open Sans", sans-serif; }
.start-btn { width: 60px; padding-left: 20px; }
.search { width: 430px; height: 50px; background: #f2f2f2; border: 1px solid #bbb; display: flex; align-items: center; padding-left: 14px; color: #2b2b2b; font-size: 17.6px; }
.search span { margin-left: 14px; padding-top: 1px; }
.tb-i { width: 62px; height: 50px; display: flex; align-items: center; justify-content: center; padding-right: 2px; }
.tb-i.act { width: 61px; background: #53616a; border-bottom: 3px solid #76b9ed; padding-top: 3px; }
.tray { margin-left: auto; }
.clock { width: 90px; display: flex; flex-direction: column; align-items: center; font-size: 14.4px; line-height: 22.5px; letter-spacing: -.25px; }
.note { margin-left: 11px; }
.peek { width: 1px; height: 50px; background: #6c777c; margin-left: 26px; margin-right: 5px; }
```
